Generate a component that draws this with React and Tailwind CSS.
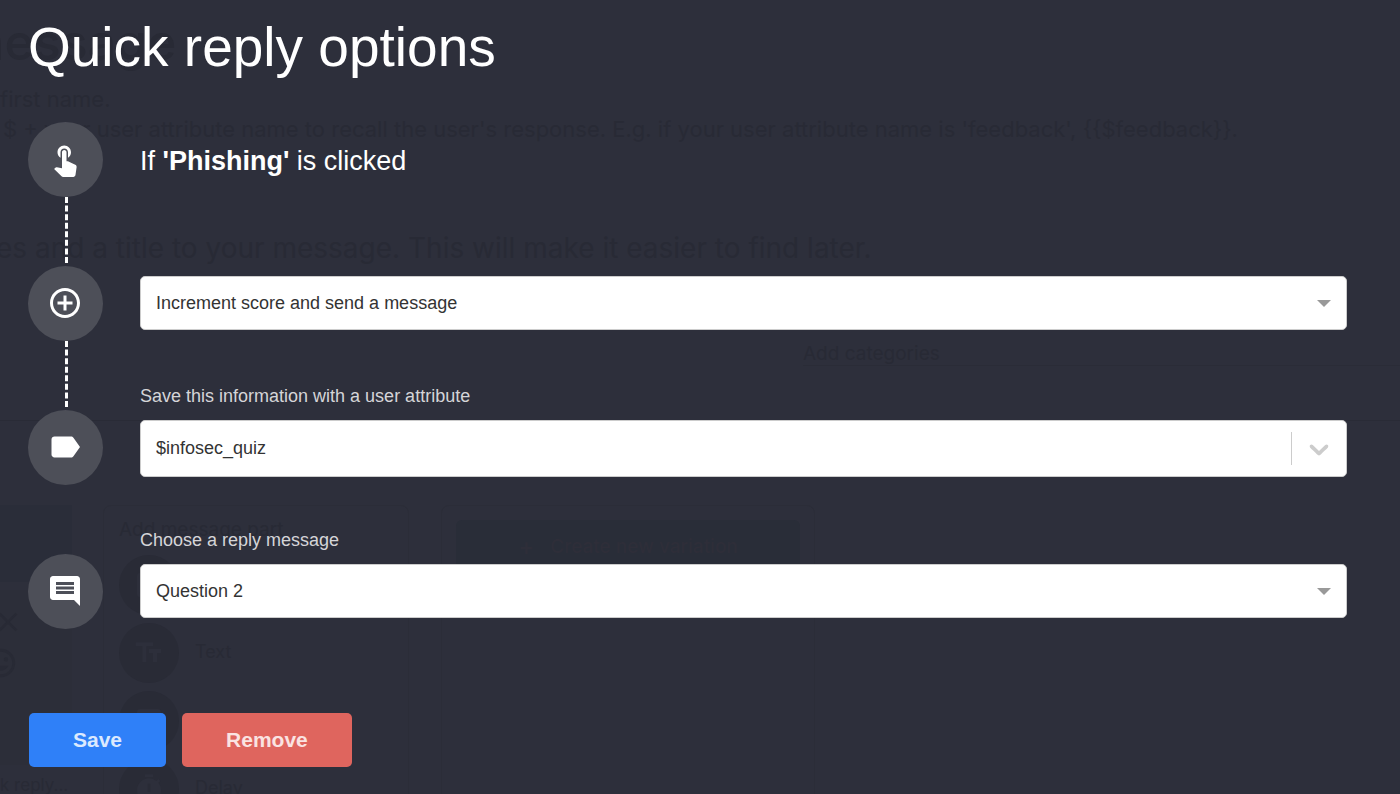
import React, { useState } from "react";
import {
  MdAddCircleOutline,
  MdClose,
  MdComment,
  MdFormatSize,
  MdImage,
  MdLabel,
  MdMood,
  MdTimer,
} from "react-icons/md";

const TouchIcon = ({ size }) => (
  <svg width={size} height={size} viewBox="0 0 24 24" fill="currentColor">
    <path d="M9 11.24V7.5C9 6.12 10.12 5 11.5 5S14 6.12 14 7.5v3.74c1.21-.81 2-2.18 2-3.74C16 5.01 13.99 3 11.5 3S7 5.01 7 7.5c0 1.56.79 2.93 2 3.74zm9.84 4.63l-4.54-2.26c-.17-.07-.35-.11-.54-.11H13v-6c0-.83-.67-1.5-1.5-1.5S10 6.67 10 7.5v10.74l-3.43-.72c-.08-.01-.15-.03-.24-.03-.31 0-.59.13-.79.33l-.79.8 4.94 4.94c.27.27.65.44 1.06.44h6.79c.75 0 1.33-.55 1.44-1.28l.75-5.27c.01-.07.02-.14.02-.2 0-.62-.38-1.16-.91-1.38z" />
  </svg>
);

const TextIcon = ({ size }) => (
  <MdFormatSize size={size} className="-scale-x-100" />
);

const steps = [TouchIcon, MdAddCircleOutline, MdLabel, MdComment];

const parts = [
  { label: "Image", Icon: MdImage },
  { label: "Text", Icon: TextIcon },
  { label: "", Icon: MdImage },
  { label: "Delay", Icon: MdTimer },
];

// Message editor, barely visible behind the overlay
const EditorBackdrop = () => (
  <div
    aria-hidden="true"
    className="absolute inset-0 overflow-hidden whitespace-nowrap font-['Inter',sans-serif] text-[#282a35]"
  >
    <div className="-ml-10 h-[84px] pt-3 text-[50px] leading-[60px] font-medium">
      message
    </div>
    <div className="text-[22px] leading-[30px]">
      <p>first name.</p>
      <p className="-ml-4">
        e $ + your user attribute name to recall the user's response. E.g. if
        your user attribute name is 'feedback', {"{{$feedback}}"}.
      </p>
    </div>
    <p className="mt-[84px] -ml-1 text-[28px] leading-10">
      es and a title to your message. This will make it easier to find later.
    </p>
    <div className="flex h-[153px] justify-end border-b border-[#292b36] pt-[74px]">
      <div className="h-6 w-[597px] border-b border-[#2a2c37] text-[19px] leading-6">
        Add categories
      </div>
    </div>

    <div className="mt-[84px] flex items-start">
      <div className="w-[72px] shrink-0">
        <div className="h-[77px] bg-[#2a2d39]" />
        <div className="mt-2 flex h-[175px] flex-col gap-2 rounded-r-3xl bg-[#2c2e39] pt-4">
          <MdClose size={32} className="-ml-2" />
          <MdMood size={34} className="-ml-4" />
        </div>
        <p className="mt-2 text-[17px] leading-6">k reply...</p>
      </div>
      <div className="ml-[31px] h-[400px] w-[306px] shrink-0 rounded-lg border border-[#2b2d38] px-[15px] pt-3">
        <p className="text-[19px] leading-6">Add message part</p>
        <div className="mt-[13px] flex flex-col gap-2">
          {parts.map(({ label, Icon }, i) => (
            <div key={i} className="flex items-center gap-4 text-[18px]">
              <span className="flex size-[60px] items-center justify-center rounded-full bg-[#292b36] text-[#2d2f3b]">
                <Icon size={32} />
              </span>
              <span className="pb-1">{label}</span>
            </div>
          ))}
        </div>
      </div>
      <div className="ml-8 h-[400px] w-[374px] shrink-0 rounded-lg border border-[#2b2d38] p-[14px]">
        <div className="flex h-[54px] items-center justify-center gap-4 rounded-md bg-[#292d38] text-[19px] font-medium text-[#2e2e39]">
          <span className="text-2xl">+</span>
          Create new variation
        </div>
      </div>
    </div>
  </div>
);

const SelectField = ({ id, label, value, options, onChange, searchable }) => (
  <div className="relative">
    <select
      id={id}
      aria-label={label}
      value={value}
      onChange={(e) => onChange(e.target.value)}
      className={`block w-full appearance-none rounded-[5px] border border-[#ccc] bg-white pr-16 pl-[15px] text-[18px] text-[#333] ${
        searchable ? "h-[57px]" : "h-[54px]"
      }`}
    >
      {options.map((option) => (
        <option key={option}>{option}</option>
      ))}
    </select>
    {searchable ? (
      <span className="pointer-events-none absolute inset-y-3 right-3 flex items-center border-l border-[#ccc] pl-[11px] text-[#ccc]">
        <svg width="32" height="32" viewBox="0 0 20 20" fill="currentColor">
          <path d="M4.516 7.548c0.436-0.446 1.043-0.481 1.576 0l3.908 3.747 3.908-3.747c0.533-0.481 1.141-0.446 1.574 0 0.436 0.445 0.408 1.197 0 1.615-0.406 0.418-4.695 4.502-4.695 4.502-0.217 0.223-0.502 0.335-0.787 0.335s-0.57-0.112-0.789-0.335c0 0-4.287-4.084-4.695-4.502s-0.436-1.17 0-1.615z" />
        </svg>
      </span>
    ) : (
      <span className="pointer-events-none absolute inset-y-0 right-4 flex items-center text-[#999]">
        <svg width="14" height="7" viewBox="0 0 14 7" fill="currentColor">
          <path d="M0 0h14L7 7z" />
        </svg>
      </span>
    )}
  </div>
);

export default function App() {
  const [action, setAction] = useState("Increment score and send a message");
  const [attribute, setAttribute] = useState("$infosec_quiz");
  const [reply, setReply] = useState("Question 2");

  return (
    <div className="relative min-h-screen bg-[#2d2f3b] font-['Liberation_Sans',Arial,sans-serif]">
      <EditorBackdrop />

      <form
        className="relative pt-4 pr-[53px] pb-[27px] pl-7 text-white"
        onSubmit={(e) => e.preventDefault()}
      >
        <h1 className="text-[55px] leading-[62px]">Quick reply options</h1>

        <div className="mt-11 flex gap-[37px]">
          {/* Timeline */}
          <div className="shrink-0">
            {steps.map((Icon, i) => (
              <div key={i} className="flex flex-col items-center">
                <span className="flex size-[75px] items-center justify-center rounded-full bg-[#4d4f58] pr-px pb-[2px]">
                  <Icon size={36} />
                </span>
                {i < 2 && (
                  <span className="mb-[3px] ml-[2px] h-[66px] border-l-[3px] border-dashed border-white" />
                )}
                {i === 2 && <span className="h-[69px]" />}
              </div>
            ))}
          </div>

          <div className="min-w-0 flex-1">
            <h2 className="flex h-[75px] items-center pt-1 text-[27px] whitespace-pre">
              If <b>'Phishing'</b> is clicked
            </h2>

            <div className="mt-[79px]">
              <SelectField
                id="action"
                label="Action"
                value={action}
                onChange={setAction}
                options={[
                  "Increment score and send a message",
                  "Send a message",
                ]}
              />
            </div>

            <label
              htmlFor="attribute"
              className="mt-[54px] mb-3 block text-[18px] leading-6 text-[#d5d5d8]"
            >
              Save this information with a user attribute
            </label>
            <SelectField
              id="attribute"
              value={attribute}
              onChange={setAttribute}
              options={["$infosec_quiz", "$feedback"]}
              searchable
            />

            <label
              htmlFor="reply"
              className="mt-[51px] mb-3 block text-[18px] leading-6 text-[#d5d5d8]"
            >
              Choose a reply message
            </label>
            <SelectField
              id="reply"
              value={reply}
              onChange={setReply}
              options={["Question 1", "Question 2", "Question 3"]}
            />
          </div>
        </div>

        <div className="mt-[84px] ml-px flex gap-4 text-[21px] font-bold">
          <button
            type="submit"
            className="h-[54px] rounded-[5px] bg-[#2f80f8] px-11 text-[#dbe9fe]"
          >
            Save
          </button>
          <button
            type="button"
            className="h-[54px] rounded-[5px] bg-[#df655e] px-11 text-[#fae3e2]"
          >
            Remove
          </button>
        </div>
      </form>
    </div>
  );
}
